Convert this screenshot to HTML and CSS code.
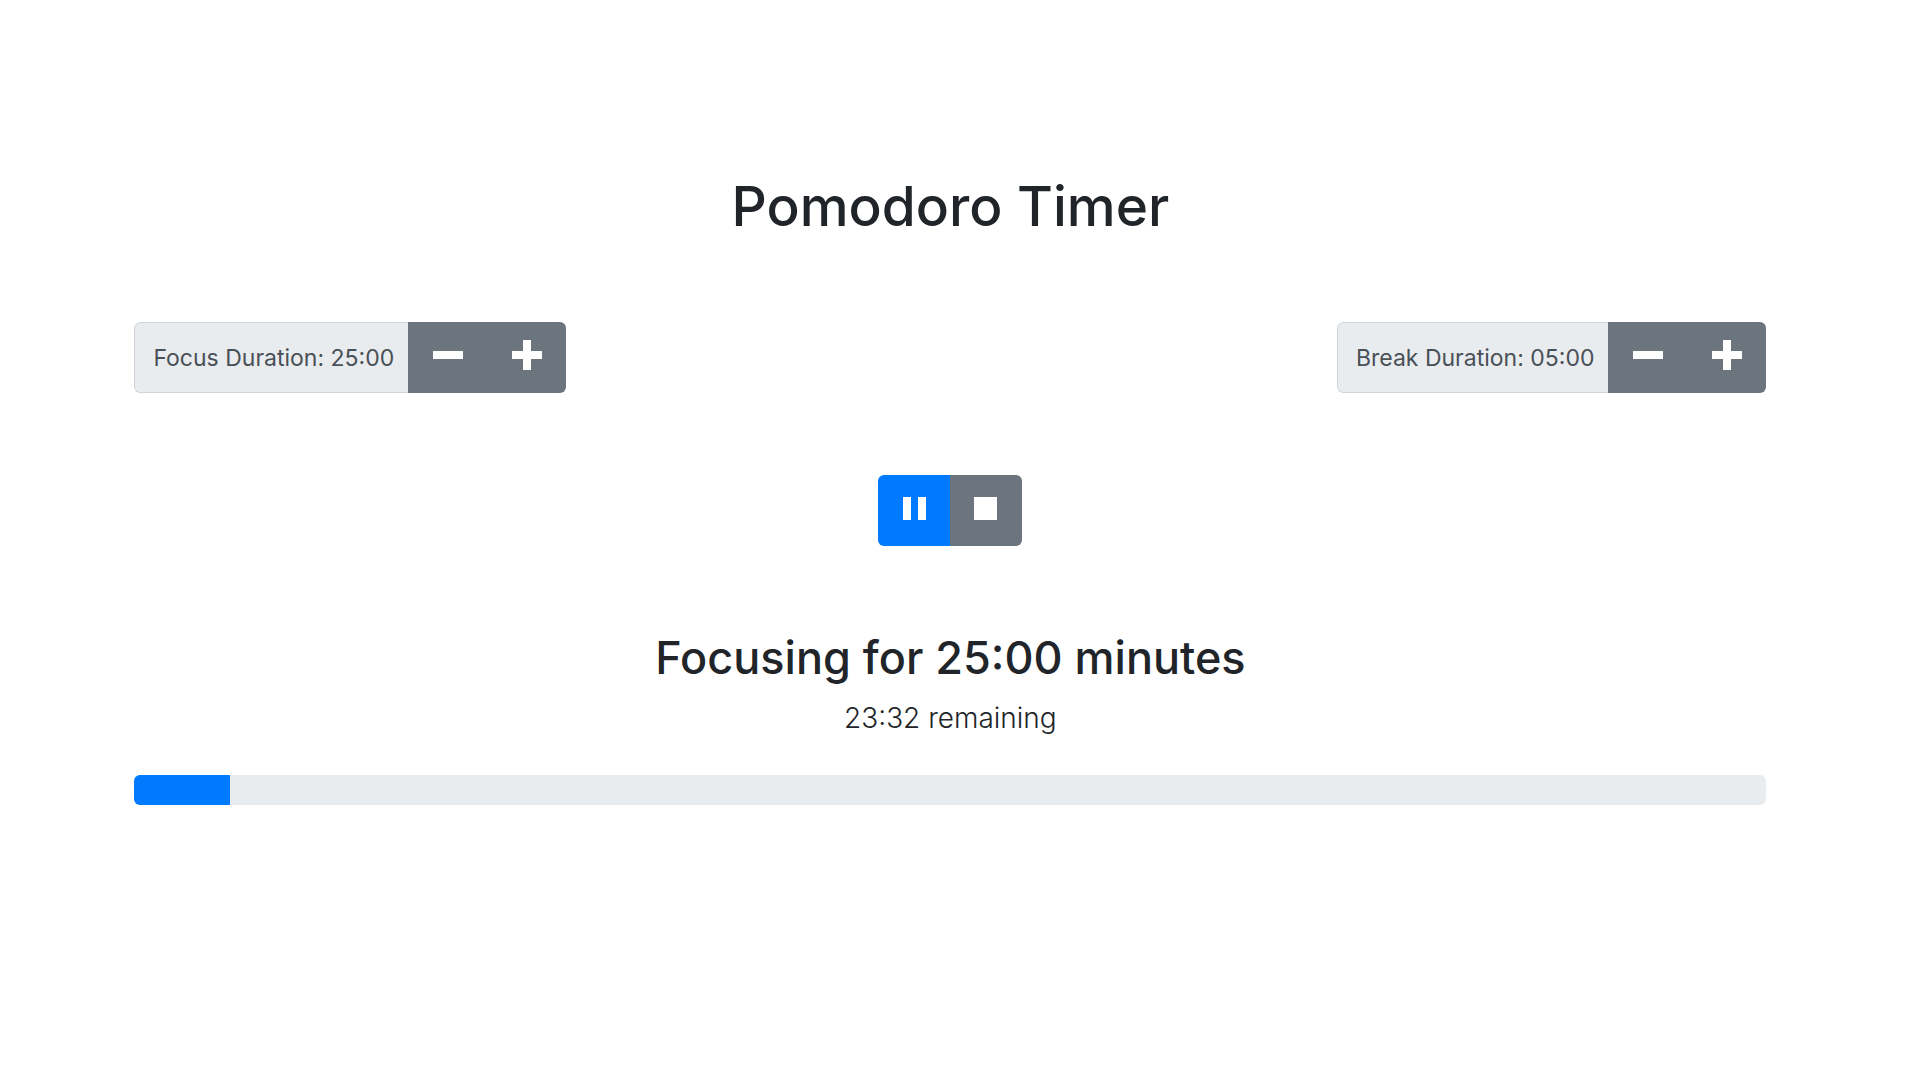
FILE: index.html
```html
<!DOCTYPE html>
<html lang="en">
<head>
<meta charset="utf-8">
<meta name="viewport" content="width=device-width, initial-scale=1">
<title>Pomodoro Timer</title>
<link rel="stylesheet" href="styles.css">
</head>
<body>
<main class="timer">
  <h1 class="title">Pomodoro Timer</h1>
  <div class="settings">
    <div class="group" role="group" aria-labelledby="focus-label">
      <span class="group-label" id="focus-label">Focus Duration: 25:00</span>
      <button class="btn btn-step" type="button" aria-label="Decrease focus duration">
        <svg class="icon" viewBox="0 0 32 32" aria-hidden="true"><path d="M1 12h30v8H1z"/></svg>
      </button>
      <button class="btn btn-step" type="button" aria-label="Increase focus duration">
        <svg class="icon" viewBox="0 0 32 32" aria-hidden="true"><path d="M12 1h8v11h11v8H20v11h-8V20H1v-8h11z"/></svg>
      </button>
    </div>
    <div class="group" role="group" aria-labelledby="break-label">
      <span class="group-label" id="break-label">Break Duration: 05:00</span>
      <button class="btn btn-step" type="button" aria-label="Decrease break duration">
        <svg class="icon" viewBox="0 0 32 32" aria-hidden="true"><path d="M1 12h30v8H1z"/></svg>
      </button>
      <button class="btn btn-step" type="button" aria-label="Increase break duration">
        <svg class="icon" viewBox="0 0 32 32" aria-hidden="true"><path d="M12 1h8v11h11v8H20v11h-8V20H1v-8h11z"/></svg>
      </button>
    </div>
  </div>
  <div class="group controls">
    <button class="btn btn-primary" type="button" aria-label="Pause">
      <svg class="icon" viewBox="0 0 32 32" aria-hidden="true"><path d="M5 5h8v23H5zM20 5h8v23h-8z"/></svg>
    </button>
    <button class="btn" type="button" aria-label="Stop">
      <svg class="icon" viewBox="0 0 32 32" aria-hidden="true"><path d="M4 5h23v23H4z"/></svg>
    </button>
  </div>
  <h2 class="session">Focusing for 25:00 minutes</h2>
  <p class="remaining">23:32 remaining</p>
  <div class="progress" role="progressbar" aria-label="Session progress" aria-valuenow="6" aria-valuemin="0" aria-valuemax="100">
    <div class="progress-bar" style="width: 5.87%"></div>
  </div>
</main>
</body>
</html>
```

FILE: styles.css
```css
* {
  box-sizing: border-box;
}

body {
  margin: 0;
  background: #fff;
  color: #212529;
  font-family: Inter, "Liberation Sans", sans-serif;
}

.timer {
  display: flex;
  flex-direction: column;
  align-items: center;
  padding: 170px 8% 40px 7%;
}

.title {
  margin: 0 0 80px;
  font-size: 55px;
  font-weight: 500;
  line-height: 72px;
}

.settings {
  display: flex;
  flex-wrap: wrap;
  justify-content: space-between;
  gap: 24px;
  width: 100%;
  margin-bottom: 82px;
}

.group {
  display: flex;
  height: 71px;
  border-radius: 6px;
  overflow: hidden;
}

.group-label {
  display: flex;
  align-items: center;
  padding: 0 14px 0 18px;
  border: 1px solid #ced4da;
  border-right: 0;
  border-radius: 6px 0 0 6px;
  background: #e9ecef;
  color: #495057;
  font-size: 23px;
  white-space: nowrap;
}

.btn {
  display: flex;
  align-items: center;
  justify-content: center;
  width: 72px;
  padding: 0 0 6px;
  border: 0;
  background: #6c757d;
  color: #fff;
  cursor: pointer;
}

.btn-step {
  width: 79px;
}

.btn-primary {
  background: #007bff;
}

.icon {
  width: 32px;
  height: 32px;
  fill: currentColor;
}

.controls {
  margin-bottom: 80px;
}

.session {
  margin: 0;
  font-size: 45px;
  font-weight: 500;
  line-height: 64px;
}

.remaining {
  margin: 8px 0 37px;
  font-size: 28px;
  font-weight: 300;
  line-height: 40px;
}

.progress {
  width: 100%;
  height: 30px;
  border-radius: 6px;
  background: #e9ecef;
  overflow: hidden;
}

.progress-bar {
  height: 100%;
  background: #007bff;
}
```
